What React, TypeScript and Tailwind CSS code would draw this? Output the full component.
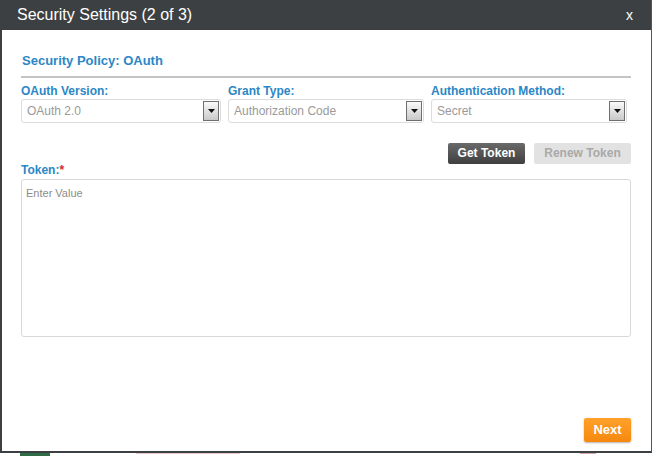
import React from "react";

function Select({ value }: { value: string }) {
	return (
		<div className="flex items-center h-[24px] border border-[#dcdcdc] rounded-[3px] bg-white pl-[5px] pr-[1px]">
			<span className="flex-1 text-[12px] text-[#9a9a9a] truncate">{value}</span>
			<div className="w-[16px] h-[20px] border border-[#6f6f6f] bg-gradient-to-b from-[#fafafa] to-[#c9c9c9] flex items-center justify-center">
				<svg width="7" height="4" viewBox="0 0 7 4">
					<path d="M0 0H7L3.5 4Z" fill="#111" />
				</svg>
			</div>
		</div>
	);
}

export default function App() {
	const fields = [
		{ label: "OAuth Version:", value: "OAuth 2.0" },
		{ label: "Grant Type:", value: "Authorization Code" },
		{ label: "Authentication Method:", value: "Secret" },
	];

	return (
		<div className="w-[653px] h-[456px] bg-white font-['Liberation_Sans',Arial,sans-serif] overflow-hidden">
			<div className="h-[453px] w-[652px] border-x-2 border-b-2 border-[#3c4042] border-r-[#555] border-r-[1px] flex flex-col">
				<div className="h-[30px] bg-[#3c4042] flex items-center justify-between pl-[15px] pr-[18px] shrink-0">
					<span className="text-white text-[16px]">Security Settings (2 of 3)</span>
					<span className="text-white text-[14px]">x</span>
				</div>
				<div className="flex-1 flex flex-col px-[19px] pt-[21px] pb-[9px]">
					<h2 className="text-[13px] font-bold text-[#2b87c6] pl-[1px] pb-[5px] border-b-2 border-[#c4c4c4] mr-[1px]">
						Security Policy: OAuth
					</h2>
					<div className="grid grid-cols-[200px_196px_196px] gap-x-[7px] mt-[6px]">
						{fields.map((f) => (
							<div key={f.label} className="flex flex-col">
								<label className="text-[12px] font-bold text-[#2b87c6] leading-[14px] mb-[1px]">{f.label}</label>
								<Select value={f.value} />
							</div>
						))}
					</div>
					<div className="flex justify-end gap-[9px] mt-[20px] mr-[1px]">
						<button className="h-[21px] w-[77px] rounded-[2px] bg-gradient-to-b from-[#6a6a6a] to-[#3f3f3f] text-white text-[12px] font-bold">
							Get Token
						</button>
						<button className="h-[21px] w-[97px] rounded-[2px] bg-[#e2e2e2] text-[#a9a9a9] text-[12px] font-bold">
							Renew Token
						</button>
					</div>
					<div className="text-[12px] font-bold text-[#2b87c6] leading-[14px] mt-[-1px]">
						Token:<span className="text-[#d9262b]">*</span>
					</div>
					<div className="h-[158px] mt-[2px] border border-[#d8d8d8] rounded-[3px] px-[4px] pt-[5px] mr-[1px] text-[11px] text-[#8c8c8c]">
						Enter Value
					</div>
					<div className="flex-1" />
					<div className="flex justify-end mr-[1px]">
						<button className="h-[24px] w-[47px] rounded-[2px] bg-gradient-to-b from-[#ffa12a] to-[#f6880c] text-white text-[13px] font-bold shadow-[0_1px_2px_rgba(0,0,0,0.3)]">
							Next
						</button>
					</div>
				</div>
			</div>
			<div className="h-[3px] flex">
				<div className="ml-[20px] w-[30px] bg-[#2f6b45]" />
				<div className="ml-[86px] w-[104px] border-t border-[#e6c6c6]" />
				<div className="ml-[340px] w-[16px] border-t border-[#d8a8a8]" />
			</div>
		</div>
	);
}
